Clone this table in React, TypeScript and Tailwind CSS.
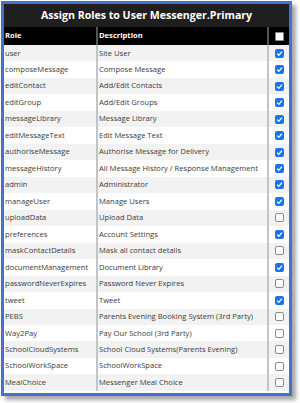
const roles: [string, string, boolean][] = [
  ['user', 'Site User', true],
  ['composeMessage', 'Compose Message', true],
  ['editContact', 'Add/Edit Contacts', true],
  ['editGroup', 'Add/Edit Groups', true],
  ['messageLibrary', 'Message Library', true],
  ['editMessageText', 'Edit Message Text', true],
  ['authoriseMessage', 'Authorise Message for Delivery', true],
  ['messageHistory', 'All Message History / Response Management', true],
  ['admin', 'Administrator', true],
  ['manageUser', 'Manage Users', true],
  ['uploadData', 'Upload Data', false],
  ['preferences', 'Account Settings', true],
  ['maskContactDetails', 'Mask all contact details', false],
  ['documentManagement', 'Document Library', true],
  ['passwordNeverExpires', 'Password Never Expires', false],
  ['tweet', 'Tweet', true],
  ['PEBS', 'Parents Evening Booking System (3rd Party)', false],
  ['Way2Pay', 'Pay Our School (3rd Party)', false],
  ['SchoolCloudSystems', 'School Cloud Systems(Parents Evening)', false],
  ['SchoolWorkSpace', 'SchoolWorkSpace', false],
  ['MealChoice', 'Messenger Meal Choice', false],
];

function Box({ checked }: { checked: boolean }) {
  if (checked) {
    return (
      <span className="flex h-[9px] w-[9px] items-center justify-center rounded-[2px] bg-[#1a73e8]">
        <svg viewBox="0 0 10 10" className="h-[7px] w-[7px]">
          <path d="M1.5 5.2 L4 7.6 L8.5 2.4" fill="none" stroke="white" strokeWidth="1.8" />
        </svg>
      </span>
    );
  }
  return <span className="block h-[9px] w-[9px] rounded-[2px] border border-[#8a8a8a] bg-white" />;
}

export default function App() {
  return (
    <div className="h-[403px] w-[300px] bg-white pl-[1px] pt-[1px] font-['Open_Sans',sans-serif]">
      <div className="flex h-[395px] w-[291px] flex-col border-[3px] border-[#4472c4] shadow-[4px_4px_4px_rgba(0,0,0,0.35)]">
        <div className="flex h-[23px] items-center justify-center bg-[#1f1f1f] text-[10.6px] font-bold text-white">
          Assign Roles to User Messenger.Primary
        </div>
        <div className="flex h-[18px] bg-black text-[7.6px] font-bold text-white">
          <div className="flex w-[92px] items-center pl-[1px]">Role</div>
          <div className="w-[2px] bg-[#555]" />
          <div className="flex w-[169px] items-center pl-[1px]">Description</div>
          <div className="w-[2px] bg-[#555]" />
          <div className="flex flex-1 items-center justify-center">
            <span className="block h-[9px] w-[9px] rounded-[1px] border border-[#888] bg-white" />
          </div>
        </div>
        <div className="flex flex-1 flex-col text-[7.6px] text-[#3a3a3a]">
          {roles.map(([role, desc, checked], i) => (
            <div
              key={role}
              className={`flex h-[16.48px] ${i % 2 === 0 ? 'bg-[#f2f2f2]' : 'bg-white'}`}
            >
              <div className="flex w-[92px] items-center overflow-hidden whitespace-nowrap pl-[1px]">{role}</div>
              <div className="w-[2px] bg-[#c4c4c4]" />
              <div className="flex w-[169px] items-center overflow-hidden whitespace-nowrap pl-[1px]">{desc}</div>
              <div className="w-[2px] bg-[#c4c4c4]" />
              <div className="flex flex-1 items-center justify-center">
                <Box checked={checked} />
              </div>
            </div>
          ))}
        </div>
      </div>
    </div>
  );
}
